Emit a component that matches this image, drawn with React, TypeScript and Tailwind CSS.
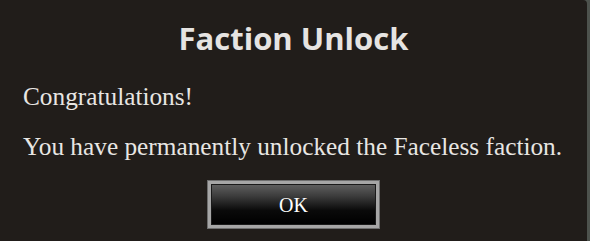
export default function App() {
  return (
    <div className="flex h-[241px] w-[590px] overflow-hidden bg-[#4d524d]">
      <div className="flex h-full w-[587px] flex-col rounded-tr-[4px] bg-[#211d1a]">
        <h1 className="mt-[18px] text-center font-['Open_Sans',sans-serif] text-[31px] font-bold leading-[40px] text-[#e6e4e2]">
          Faction Unlock
        </h1>
        <div className="mt-[23px] pl-[23px] font-['Liberation_Serif',serif] text-[25.3px] leading-[30px] text-[#e8e6e3]">
          <p>Congratulations!</p>
          <p className="mt-[20px]">You have permanently unlocked the Faceless faction.</p>
        </div>
        <div className="mt-[19px] flex justify-center">
          <button className="h-[49px] w-[173px] border border-[#6e6e6e] bg-[#a6a6a6] p-[3px]">
            <span className="flex h-full w-full items-center justify-center border border-[#1a1a1a] bg-[linear-gradient(to_bottom,#5e5e5e_0%,#3a3a3a_30%,#0a0a0a_65%,#000_100%)] font-['Liberation_Serif',serif] text-[20px] text-white">
              OK
            </span>
          </button>
        </div>
      </div>
    </div>
  );
}
